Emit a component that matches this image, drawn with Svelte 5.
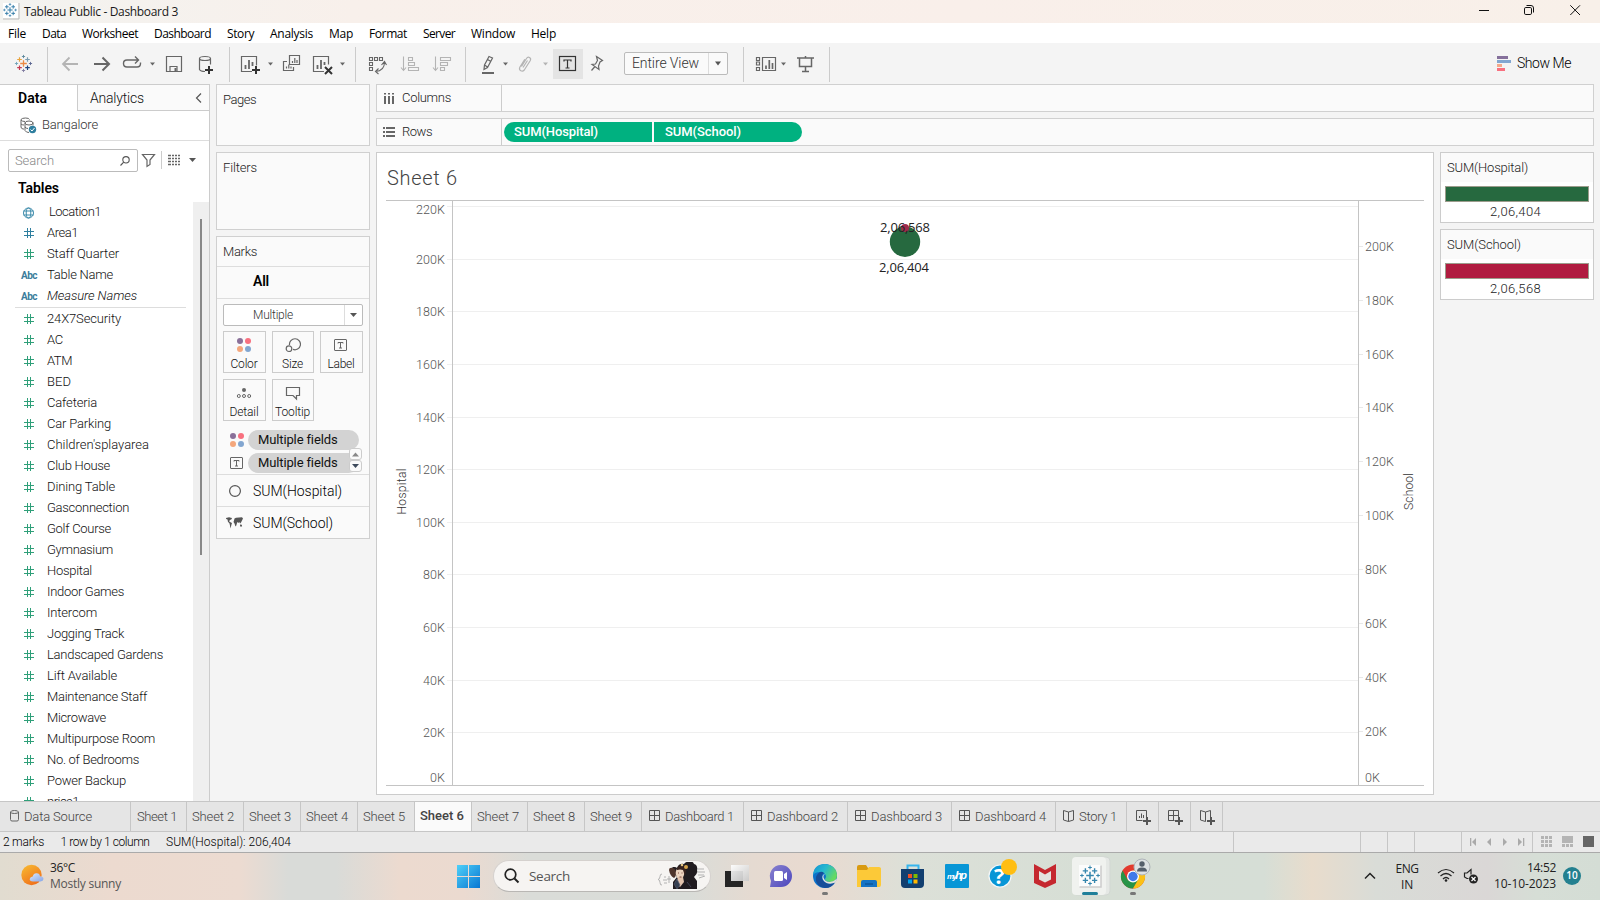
<script>
  // Spreads the letters of a label so that it takes the given width.
  function fit(node, width) {
    const current = node.getBoundingClientRect().width;
    const count = node.textContent.length;
    if (width && count) node.style.letterSpacing = ((width - current) / count).toFixed(3) + 'px';
  }

  const menu = [['File', 18, 34], ['Data', 24, 40], ['Worksheet', 56, 72], ['Dashboard', 57, 73], ['Story', 27, 43], ['Analysis', 43, 59], ['Map', 24, 40], ['Format', 38, 54], ['Server', 32, 48], ['Window', 44, 60], ['Help', 25, 41]];

  const dimensions = [['globe', 'Location1', 52], ['num dim', 'Area1', 31], ['num', 'Staff Quarter', 72], ['abc', 'Table Name', 66], ['abc', 'Measure Names', 90]];
  const measures = [['24X7Security', 74], ['AC', 16], ['ATM', 25], ['BED', 24], ['Cafeteria', 50], ['Car Parking', 64], ["Children'splayarea", 102], ['Club House', 63], ['Dining Table', 68], ['Gasconnection', 82], ['Golf Course', 64], ['Gymnasium', 66], ['Hospital', 45], ['Indoor Games', 77], ['Intercom', 50], ['Jogging Track', 77], ['Landscaped Gardens', 116], ['Lift Available', 70], ['Maintenance Staff', 100], ['Microwave', 59], ['Multipurpose Room', 108], ['No. of Bedrooms', 92], ['Power Backup', 79], ['price1', 32]];

  const leftAxis = Array.from({ length: 12 }, (_, i) => ({ label: i * 20 + 'K', y: 785.3 - i * 52.6, ty: i === 0 ? 777 : i === 11 ? 209.3 : 785 - i * 52.62 + 0.4 }));
  const rightAxis = Array.from({ length: 11 }, (_, i) => ({ label: i * 20 + 'K', y: 785 - i * 53.87, ty: i === 0 ? 777 : 785 - i * 53.87 }));

  const tabs = [['db', 'Data Source', 68, 131], ['first', 'Sheet 1', 40, 56], ['', 'Sheet 2', 42, 57], ['', 'Sheet 3', 42, 57], ['', 'Sheet 4', 42, 57], ['', 'Sheet 5', 42, 57], ['', 'Sheet 6', 44, 57], ['', 'Sheet 7', 42, 56], ['', 'Sheet 8', 42, 57], ['', 'Sheet 9', 42, 57], ['dash', 'Dashboard 1', 69, 102], ['dash', 'Dashboard 2', 71, 104], ['dash', 'Dashboard 3', 71, 104], ['dash', 'Dashboard 4', 71, 104], ['story', 'Story 1', 38, 71]];
</script>

{#snippet caret(x, y, c = '#666')}
  <path d="M{x - 2.5} {y - 1.5}h5l-2.5 3z" fill={c} stroke="none" />
{/snippet}

{#snippet plus(x, y, c = '#333')}
  <path d="M{x - 4} {y}h8M{x} {y - 4}v8" stroke={c} stroke-width="2" fill="none" />
{/snippet}

{#snippet cross(x, y, r, c, w = 1)}
  <path d="M{x - r} {y}h{2 * r}M{x} {y - r}v{2 * r}" stroke={c} stroke-width={w} fill="none" />
{/snippet}

{#snippet tableauMark(x, y, s, mono)}
  <g transform="translate({x} {y}) scale({s})">
    {@render cross(0, 0, 3.3, mono ?? '#eb8a44', 1.3)}
    {@render cross(-4, -4, 2.3, mono ?? '#e8a33d', 1.2)}
    {@render cross(4, -4, 2.3, mono ?? '#7c9db0', 1.2)}
    {@render cross(-4, 4.2, 2.3, mono ?? '#c43a51', 1.2)}
    {@render cross(4, 4.2, 2.3, mono ?? '#1f457e', 1.2)}
    {@render cross(0, -7, 1.6, mono ?? '#5b879b', 0.9)}
    {@render cross(0, 7, 1.6, mono ?? '#7f7aa0', 0.9)}
    {@render cross(-7, 0, 1.6, mono ?? '#6fa3b8', 0.9)}
    {@render cross(7, 0, 1.6, mono ?? '#5a6591', 0.9)}
  </g>
{/snippet}

{#snippet fourDots()}
  <svg width="16" height="16" viewBox="0 0 16 16"><circle cx="4" cy="4" r="3" fill="#8a7099" /><circle cx="12" cy="4" r="3" fill="#f8707f" /><circle cx="4" cy="12" r="3" fill="#f4a77c" /><circle cx="12" cy="12" r="3" fill="#82a6d0" /></svg>
{/snippet}

{#snippet labelIcon()}
  <svg width="14" height="12" viewBox="0 0 14 12" fill="none" stroke="#666"><rect x=".5" y=".5" width="12" height="11" rx=".5" /><path d="M4 4.500V3.500h5v1M6.500 3.500v5.500M5 9h3" /></svg>
{/snippet}

<div class="window">
  <header class="titlebar">
    <svg width="18" height="18" viewBox="0 0 18 18"><path d="M1 1h15v15h-15z" fill="#fff" /><path d="M1 17h16V1" stroke="#bbb" fill="none" />{@render tableauMark(8, 8, 0.8, '#337ca8')}</svg>
    <span class="caption" use:fit={154}>Tableau Public - Dashboard 3</span>
    <svg class="controls" width="121" height="23" viewBox="1479 0 121 23" fill="none" stroke="#111"><path d="M1479 10.500h10" /><rect x="1524.500" y="7.500" width="7" height="7" rx="1.300" /><path d="M1526.500 5.500h4.500q2.500 0 2.500 2.500v4.500" /><path d="M1570.300 5.300l9.700 9.700M1580 5.300l-9.700 9.700" /></svg>
  </header>

  <nav class="menubar">
    {#each menu as [name, w, slot]}
      <div class="menuitem" style:width="{slot}px"><span use:fit={w}>{name}</span></div>
    {/each}
  </nav>

  <div class="toolbar">
    <div class="group"><svg width="47" height="34" viewBox="0 47 47 34">{@render tableauMark(23.5, 63.5, 1, undefined)}</svg></div>
    <div class="group">
      <svg width="181" height="34" viewBox="48 47 181 34" fill="none" stroke="#666" stroke-width="1.500">
        <path d="M78 64H63M69.500 57.500L63 64l6.500 6.500" stroke="#b4b4b4" stroke-width="1.800" />
        <path d="M94 64h15M102.500 57.500L109 64l-6.500 6.500" stroke-width="2" />
        <path d="M138.500 60H127q-3.500 0-3.500 3.500t3.500 3.500h10q3.500 0 3.500-3.500v-1M135 56.500l3.500 3.500-3.500 3.500" stroke-width="1.400" />
        {@render caret(152.5, 64)}
        <path d="M166.500 56.500h15v15h-15zM170 71.500v-5h7v5" stroke-width="1.200" /><path d="M174.500 68h2v3h-2z" fill="#666" stroke="none" />
        <path d="M199.500 58.500v11q1 2 5.500 2M210.500 58.500v6M199.500 58.500q0-2 5.500-2t5.500 2-5.500 2-5.500-2" stroke-width="1.200" />
        {@render plus(209, 70)}
      </svg>
    </div>
    <div class="group">
      <svg width="125" height="34" viewBox="230 47 125 34" fill="none" stroke="#666" stroke-width="1.200">
        <path d="M252 71.500H241.500v-15h15v9" /><path d="M245.500 69v-4M249 69v-9M252.500 66v-4" stroke-width="1.800" />{@render plus(256, 70)}
        {@render caret(270.5, 64)}
        <path d="M289.500 55.500h10v9h-10zM287 61.500h-3.500v9h10v-3.500" /><path d="M292.500 63v-2M294.800 63v-5M297 63v-3M286.500 68.500v-2M288.800 68.500v-4M291 68.500v-2" />
        <path d="M324 71.500H313.500v-15h15v8" /><path d="M317.500 69v-4M321 69v-9M324.500 65v-3" stroke-width="1.800" /><path d="M325 67l7 7M332 67l-7 7" stroke="#333" stroke-width="2" />
        {@render caret(342.500, 64)}
      </svg>
    </div>
    <div class="group">
      <svg width="109" height="34" viewBox="356 47 109 34" fill="none" stroke="#666" stroke-width="1.100">
        <path d="M369.500 57.500h3v3h-3zM374.500 57.500h3v3h-3zM379.500 57.500h3v3h-3zM369.500 62.500h3v3h-3zM369.500 67.500h3v3h-3zM384.500 62q0 9-9 9.500M381.500 65l3-3.500 2 3.500M378.500 68.500l-3 3 3 2.500" />
        <g stroke="#b4b4b4"><path d="M403.500 56.500v14M401 67.500l2.500 3 2.500-3M408.500 57.500h4v3h-4zM408.500 62.500h6v3h-6zM408.500 67.500h10v3h-10z" /><path d="M435.500 56.500v14M433 67.500l2.500 3 2.500-3M440.500 57.500h10v3h-10zM440.500 62.500h7v3h-7zM440.500 67.500h4v3h-4z" /></g>
      </svg>
    </div>
    <div class="group last-view">
      <svg width="158" height="34" viewBox="466 47 158 34" fill="none" stroke="#666" stroke-width="1.200">
        <path d="M489 56.500l3.500 1.500-5 9.500-3.500 2 .5-4.500zM484.500 65l3 2M487.500 59.500l3.500 2" /><path d="M482 73h12" stroke-width="2" />{@render caret(505.5, 64)}
        <path d="M521.500 66.500l5-8q1.200-2 3-1t.8 3l-6 9.500q-1.500 1.800-3.500.8t-1-3.500l5-8M523 67.500l4.500-7" stroke="#b4b4b4" />{@render caret(545.5, 64, '#b4b4b4')}
        <rect x="553" y="49" width="30" height="30" fill="#e4e4e4" stroke="none" /><rect x="559.500" y="56.500" width="16" height="14" stroke="#333" /><path d="M564 61.500v-1.500h7v1.500M567.500 60v8M565.500 68h4" stroke="#333" />
        <path d="M596.500 56.500l6 4-2.500 1.500-1.500 4 .5 3.500-7-5 3.500-.5 2-3.500zM595 66.500l-3.500 4" />
      </svg>
      <div class="select view"><span use:fit={67}>Entire View</span><i><svg width="18" height="20" viewBox="0 0 18 20"><path d="M6 8.500h6l-3 4z" fill="#555" /></svg></i></div>
    </div>
    <div class="group">
      <svg width="85" height="34" viewBox="744 47 85 34" fill="none" stroke="#666" stroke-width="1.200">
        <path d="M756.500 57.500h3v3h-3zM756.500 62h3v3h-3zM756.500 67.500h3v3h-3zM762.500 57.500h13v13h-13z" /><path d="M766 69v-3.500M769.300 69v-9M772.500 69v-6" stroke-width="1.700" />{@render caret(783.5, 64)}
        <path d="M797 58h17M799.500 58v8.500h12V58M805.500 56v2M805.500 66.500v5M802 71.500h7" stroke-width="1.500" />
      </svg>
    </div>
    <div class="showme"><svg width="14" height="15" viewBox="0 0 14 15"><path d="M0 0h11v3H0z" fill="#85709b" /><path d="M0 4h14v3H0z" fill="#82a6d0" /><path d="M0 8h5v3H0z" fill="#f4a98a" /><path d="M0 12h8v3H0z" fill="#f8707f" /></svg><span use:fit={54}>Show Me</span></div>
  </div>

  <main>
    <aside class="data">
      <div class="panetabs"><b><span use:fit={29}>Data</span></b><div class="analytics"><span use:fit={54}>Analytics</span><svg width="7" height="10" viewBox="0 0 7 10"><path d="M6 .5L1.500 5 6 9.500" fill="none" stroke="#555" stroke-width="1.200" /></svg></div></div>
      <div class="source">
        <svg width="17" height="17" viewBox="0 0 17 17" fill="none" stroke="#666"><path d="M4 12H3q-2-.5-2-2V2.500Q2 1 5.500 1t4 1.500M1 3q1 1.500 4 1.500M1 7q1 1 3 1M5 5.500v8q1 2 4 2M13 5.500v3M5 6q0-2 4-2t4 2-4 2-4-2M5 10q1 1.500 3 1.500" /><circle cx="12.500" cy="12.500" r="3.700" fill="#2f7f9f" stroke="none" /><path d="M10.500 12.500l1.500 1.500 2.500-3" stroke="#fff" /></svg>
        <span use:fit={56}>Bangalore</span>
      </div>
      <div class="searchrow">
        <div class="search"><span use:fit={39}>Search</span><svg width="10" height="10" viewBox="0 0 10 10" fill="none" stroke="#555" stroke-width="1.100"><circle cx="6" cy="3.800" r="3.200" /><path d="M3.700 6.200L.5 9.500" /></svg></div>
        <svg width="57" height="22" viewBox="141 149 57 22" fill="none" stroke="#666"><path d="M142.500 154.500h12l-4.500 5.500v4.500l-3 2v-6.500z" stroke-width="1.200" /><path d="M161.500 151v18" stroke="#ccc" /><path d="M168 155.500h12M168 158.500h12M168 161.500h12M168 164.500h12" stroke-dasharray="3 1 2 1 2 1 2" stroke-width="1.400" /><path d="M189 158h7l-3.500 4z" fill="#555" stroke="none" /></svg>
      </div>
      <div class="fields">
        <h3><span use:fit={41}>Tables</span></h3>
        <div class="scroller">
          <ul>
            {#each dimensions as [kind, name, w]}
              <li class:location={kind === 'globe'} class:italic={name === 'Measure Names'}>
                {#if kind === 'abc'}<em><span use:fit={16}>Abc</span></em>
                {:else if kind === 'globe'}<svg width="13" height="12" viewBox="0 0 13 12" fill="none" stroke="#3b8aaa"><circle cx="6.500" cy="6" r="5" /><ellipse cx="6.500" cy="6" rx="2.300" ry="5" /><path d="M1.500 4h10M1.500 8h10" /></svg>
                {:else}<svg width="11" height="11" viewBox="0 0 11 11" fill="none" stroke={kind === 'num' ? '#2f9f79' : '#2f7f9f'}><path d="M0 3.500h10M0 7.500h10M3.500 0v10M6.500 0v10" /></svg>{/if}
                <span class="field" use:fit={w}>{name}</span>
              </li>
            {/each}
            <li class="rule"></li>
            {#each measures as [name, w]}
              <li><svg width="11" height="11" viewBox="0 0 11 11" fill="none" stroke="#2f9f79"><path d="M0 3.500h10M0 7.500h10M3.500 0v10M6.500 0v10" /></svg><span class="field" use:fit={w}>{name}</span></li>
            {/each}
          </ul>
          <div class="track"><div class="thumb"></div></div>
        </div>
      </div>
    </aside>

    <section class="cards">
      <div class="card pages"><span use:fit={33}>Pages</span></div>
      <div class="card filters"><span use:fit={34}>Filters</span></div>
      <div class="card marks">
        <div class="mtitle"><span use:fit={34}>Marks</span></div>
        <div class="all"><span use:fit={16}>All</span></div>
        <div class="select multiple"><span use:fit={40}>Multiple</span><i><svg width="17" height="19" viewBox="0 0 17 19"><path d="M5 8h7l-3.500 4z" fill="#555" /></svg></i></div>
        <div class="buttons">
          <div>{@render fourDots()}<span use:fit={27}>Color</span></div>
          <div><svg width="16" height="16" viewBox="0 0 16 16" fill="none" stroke="#666" stroke-width="1.200"><path d="M4.500 8A5.500 5.500 0 1 1 8 12.400" /><circle cx="4" cy="11.700" r="2.800" /></svg><span use:fit={21}>Size</span></div>
          <div><i class="ic">{@render labelIcon()}</i><span use:fit={27}>Label</span></div>
          <div><svg width="16" height="16" viewBox="0 0 16 16" fill="none" stroke="#666"><circle cx="8" cy="5" r="2" fill="#666" stroke="none" /><circle cx="2.800" cy="11" r="1.500" /><circle cx="8" cy="11" r="1.500" /><circle cx="13.200" cy="11" r="1.500" /></svg><span use:fit={29}>Detail</span></div>
          <div><svg width="16" height="16" viewBox="0 0 16 16" fill="none" stroke="#666" stroke-width="1.200"><path d="M1.500 2.500h13v8h-3V14L8 10.500H1.500z" /></svg><span use:fit={35}>Tooltip</span></div>
        </div>
        <div class="encodings">
          <div class="enc">{@render fourDots()}<p><span use:fit={79}>Multiple fields</span></p></div>
          <div class="enc second"><i class="ic">{@render labelIcon()}</i><p><span use:fit={79}>Multiple fields</span></p></div>
          <div class="spin"><i><svg width="11" height="10"><path d="M2 7.500h7l-3.500-4z" fill="#888" /></svg></i><i><svg width="11" height="10"><path d="M2 3h7l-3.500 4z" fill="#3d4a5c" /></svg></i></div>
        </div>
        <div class="markrow"><svg width="17" height="14" viewBox="0 0 17 14"><circle cx="8" cy="7" r="5.400" fill="none" stroke="#555" stroke-width="1.200" /></svg><span use:fit={89}>SUM(Hospital)</span></div>
        <div class="markrow"><svg width="17" height="12" viewBox="0 0 17 12" fill="#555"><path d="M0 1l3-.7 3 .7-.5 1.200L4 3 3 4.200 4.500 5.200 6 6 5.500 7.500 5 9.500l-.6 2-.5-3.500-.6-2L2 5 1.500 2.500.2 2zM8 3.500L8.500 1.500 10 .8l6-.5 1 1.200-1 2-1 2-1 1-.7-1.500-.8 1-.8-1L11 6l-.7 2.500-.8 1L8.500 6.500 7.500 5zM14 7.500l1.800.3.3 1.700h-2z" /></svg><span use:fit={80}>SUM(School)</span></div>
      </div>
    </section>

    <section class="work">
      <div class="shelf"><div class="name"><svg width="12" height="13" viewBox="0 0 12 13" fill="#666"><path d="M1 1h2v1.500H1zM1 4h2v8H1zM5 1h2v1.500H5zM5 4h2v8H5zM9 1h2v1.500H9zM9 4h2v8H9z" /></svg><span use:fit={49}>Columns</span></div></div>
      <div class="shelf"><div class="name rows"><svg width="12" height="10" viewBox="0 0 12 10" fill="#666"><path d="M0 0h2v2H0zM3 0h9v2H3zM0 4h2v2H0zM3 4h9v2H3zM0 8h2v2H0zM3 8h9v2H3z" /></svg><span use:fit={30}>Rows</span></div><div class="pills"><div><span use:fit={84}>SUM(Hospital)</span></div><div><span use:fit={76}>SUM(School)</span></div></div></div>
      <div class="canvas">
        <div class="viz">
          <svg width="1056" height="641" viewBox="377 153 1056 641">
            <text x="387" y="184.500" font-size="20" fill="#444" textLength="70" class="light">Sheet 6</text>
            {#each leftAxis as t}
              <path d="M447 {Math.floor(t.y) + 0.5}H1358" stroke="#efefef" />
              <text x={t.label.length === 2 ? 430 : t.label.length === 3 ? 423 : 416} y={t.ty + 4.5} textLength={t.label.length === 2 ? 15 : t.label.length === 3 ? 22 : 29} class="tick">{t.label}</text>
            {/each}
            {#each rightAxis as t}
              <path d="M1359 {Math.floor(t.y) + 0.5}h4" stroke="#e8e8e8" />
              <text x="1365" y={t.ty + 4.5} textLength={t.label.length === 2 ? 15 : t.label.length === 3 ? 22 : 29} class="tick">{t.label}</text>
            {/each}
            <path d="M386 200.500h1038M386 785.500h1038M452.500 201v584M1358.500 201v584" stroke="#c4c4c4" />
            <text transform="translate(406 514.500) rotate(-90)" textLength="46" class="axis">Hospital</text>
            <text transform="translate(1413 510) rotate(-90)" textLength="37" class="axis">School</text>
            <circle cx="905" cy="241.700" r="15.200" fill="#26693f" />
            <circle cx="905" cy="228" r="4" fill="#9e2a4c" />
            <text x="880" y="232" textLength="50" class="value">2,06,568</text>
            <text x="879" y="272" textLength="50" class="value">2,06,404</text>
          </svg>
        </div>
        <div class="legends">
          <div class="legend"><h4><span use:fit={81}>SUM(Hospital)</span></h4><div class="bar green"></div><p><span use:fit={51}>2,06,404</span></p></div>
          <div class="legend"><h4><span use:fit={74}>SUM(School)</span></h4><div class="bar red"></div><p><span use:fit={51}>2,06,568</span></p></div>
        </div>
      </div>
    </section>
  </main>

  <div class="tabs">
    {#each tabs as [icon, name, w, slot]}
      <div class="tab {icon}" class:active={name === 'Sheet 6'} style:width="{slot}px">
        {#if icon === 'db'}<svg width="9" height="12" viewBox="0 0 9 12" fill="none" stroke="#666"><path d="M.5 2v7.500q0 1.500 1.500 1.500h5q1.500 0 1.500-1.500V2q-.2-1.500-4-1.500T.5 2t4 1.500T8.500 2" /></svg>{/if}
        {#if icon === 'dash'}<svg width="11" height="11" viewBox="0 0 11 11" fill="none" stroke="#555"><path d="M.5.5h10v10H.5zM5.500.5v10M.5 5.500h10" /></svg>{/if}
        {#if icon === 'story'}<svg width="11" height="12" viewBox="0 0 11 12" fill="none" stroke="#555"><path d="M5.500 2v9.500M.5.5L5.500 2l5-1.500V10l-5 1.500L.5 10z" /></svg>{/if}
        <span use:fit={w}>{name}</span>
      </div>
    {/each}
    <div class="new"><svg width="16" height="16" viewBox="0 0 16 16" fill="none" stroke="#555"><path d="M7.500 11.500h-6V1.500h10V8M4.500 9V7M6.500 9V4.500M8.500 9V6" />{@render plus(12, 12, '#555')}</svg></div>
    <div class="new"><svg width="16" height="16" viewBox="0 0 16 16" fill="none" stroke="#555"><path d="M7.500 11.500h-6V1.500h10V8M6.500 1.500v10M1.500 6.500h10" />{@render plus(12, 12, '#555')}</svg></div>
    <div class="new"><svg width="16" height="16" viewBox="0 0 16 16" fill="none" stroke="#555"><path d="M6.500 3v9.500L1.500 11V1.500L6.500 3l5-1.500V8" />{@render plus(12, 12, '#555')}</svg></div>
  </div>

  <div class="status">
    <div class="info"><span use:fit={41}>2 marks</span><span use:fit={89}>1 row by 1 column</span><span use:fit={125}>SUM(Hospital): 206,404</span></div>
    <div class="w1"></div><div class="w2"></div><div class="w2"></div><div class="w3"></div>
    <div class="nav"><svg width="70" height="20" viewBox="0 0 70 20" fill="#aaa"><path d="M8 6h1.300v8H8zM14 6v8l-4-4zM29 6v8l-4-4zM41 6v8l4-4zM56 6v8l4-4zM61 6h1.300v8H61z" /></svg></div>
    <svg width="67" height="20" viewBox="1533 832 67 20" fill="#b4b4b4"><path d="M1541 836h3v3h-3zM1545 836h3v3h-3zM1549 836h3v3h-3zM1541 840h3v3h-3zM1545 840h3v3h-3zM1549 840h3v3h-3zM1541 844h3v3h-3zM1545 844h3v3h-3zM1549 844h3v3h-3zM1562 836h11v7h-11zM1562 844h3v3h-3zM1566 844h3v3h-3zM1570 844h3v3h-3z" /><path d="M1583 836h11v11h-11z" fill="#666" /></svg>
  </div>

  <footer class="taskbar">
    <div class="weather">
      <svg width="24" height="24" viewBox="0 0 24 24"><defs><linearGradient id="sun" x1="0" y1="0" x2=".6" y2="1"><stop offset="0" stop-color="#f8bd32" /><stop offset="1" stop-color="#f0711b" /></linearGradient><linearGradient id="cloud" x1="0" y1="0" x2="1" y2="1"><stop offset="0" stop-color="#dce8fc" /><stop offset="1" stop-color="#86a6e8" /></linearGradient></defs><circle cx="10.500" cy="11" r="10.200" fill="url(#sun)" /><path d="M12 17.500q-3.500-.3-3.300-2.500.5-2.300 3-2.500 1-3.500 4-3.200 3 .2 3.300 3 3.300 0 3.500 2.700-.2 2.200-3 2.500z" fill="url(#cloud)" /></svg>
      <div><span use:fit={25}>36°C</span><small><span use:fit={71}>Mostly sunny</span></small></div>
    </div>
    <div class="apps">
      <svg width="44" height="47" viewBox="0 0 44 47"><defs><linearGradient id="win" x1="0" y1="0" x2="1" y2="1"><stop offset="0" stop-color="#4fd0f8" /><stop offset="1" stop-color="#0876d2" /></linearGradient></defs><path d="M11 12h11v11h-11zM23 12h11v11h-11zM11 24h11v11h-11zM23 24h11v11h-11z" fill="url(#win)" /></svg>
      <div class="find">
        <svg width="16" height="16" viewBox="0 0 16 16" fill="none" stroke="#222" stroke-width="1.700"><circle cx="6.500" cy="6.500" r="5.300" /><path d="M10.500 10.500l4 4" stroke-width="2" /></svg>
        <span use:fit={41}>Search</span>
        <svg class="portrait" width="50" height="28" viewBox="0 0 50 28"><g fill="none" stroke="#aaa" stroke-width=".9"><path d="M5 12q-2 0-2 2.500T1 17.500q2 0 2 3t2 2.500M7 15h2M6 18h4M7 21h3M12 14v7M10 17h4M40 7h7M39 10h9M41 13h6M42 16l6-2" /></g><path d="M16 9q-3-2 0-4 3-.5 4 1 2-5 7-4 2-3 6-2 3-1 4 2 4 1 3 6 1 4-3 7l3 4v8H16V20l4-5z" fill="#211c20" /><path d="M12 8q0-3 4-2 3 1 3 5 0 4-2 5-4-2-5-8z" fill="#50352c" /><ellipse cx="23" cy="11" rx="4.300" ry="6" fill="#ecd3bf" /><path d="M21 15h5l1 5-4 5-4-4z" fill="#e4c4ae" /><path d="M20 6q2-3 6-2l3 4-1 6-2-6q-3-1-6 0z" fill="#38221e" /><circle cx="29" cy="5" r="2" fill="#d6a34b" /><circle cx="25" cy="3" r="1.300" fill="#e6c684" /><path d="M21 11h1M24.500 11h1M22.500 15h2" stroke="#6a2d29" stroke-width=".8" /><path d="M17 22l3-5 3 6-3 4zM30 20l4 5" fill="#364052" stroke="#555d74" stroke-width=".6" /></svg>
      </div>
      <svg width="44" height="47" viewBox="0 0 44 47"><defs><linearGradient id="pane" x1="0" y1="0" x2="1" y2="1"><stop offset="0" stop-color="#fff" /><stop offset="1" stop-color="#c9c9c9" /></linearGradient></defs><path d="M10 18h18v16H10z" fill="#252525" /><path d="M16 12h18v16H16z" fill="url(#pane)" opacity=".92" /></svg>
      <svg width="44" height="47" viewBox="0 0 44 47"><defs><linearGradient id="chat" x1="0" y1="0" x2="1" y2="1"><stop offset="0" stop-color="#8a83cf" /><stop offset="1" stop-color="#4b45bd" /></linearGradient></defs><path d="M22 12a11 11 0 1 1 0 22H11l1-6A11 11 0 0 1 22 12z" fill="url(#chat)" /><rect x="15" y="18" width="9" height="10" rx="1.500" fill="#fff" /><path d="M25 21l3-2v8l-3-2z" fill="#fff" /></svg>
      <svg width="44" height="47" viewBox="0 0 44 47"><defs><linearGradient id="edge" x1="0" y1="0" x2="1" y2=".5"><stop offset="0" stop-color="#1593d4" /><stop offset=".5" stop-color="#27b8cf" /><stop offset="1" stop-color="#66da61" /></linearGradient></defs><circle cx="22" cy="23" r="12" fill="#0c71c9" /><path d="M10 22Q11 11 22 11q11 1 12 11 0 6-6 7-6 0-6-3 1-1 1-3-1-4-6-4-5 0-7 3z" fill="url(#edge)" /><path d="M17 19q-5 3-4 9 2 6 9 7 7 0 10-6-4 3-9 1-5-3-4-8 1-1 2-2-2-2-4-1z" fill="#164d99" /><path d="M23 20.500q-3 1-2.500 4 1.500 4.500 6.500 4.500 4-.5 7-3.500l-1.500 4q-5 2-9 .5-5-3-4-7 .5-2 3.500-2.500z" fill="#e5e0da" /><rect x="19" y="39" width="6" height="3" rx="1.500" fill="#777" /></svg>
      <svg width="44" height="47" viewBox="0 0 44 47"><path d="M10 14q0-2 2-2h7l2 3h11q2 0 2 2v9H10z" fill="#d99a10" /><path d="M10 17h10l2-3h10q2 0 2 2v16q0 2-2 2H10z" fill="#fcc938" /><path d="M14 34v-5q0-2 2-2h12q2 0 2 2v5z" fill="#1573c4" /><path d="M18 31h8" stroke="#0b579e" stroke-width="1.500" /></svg>
      <svg width="44" height="47" viewBox="0 0 44 47"><path d="M16.500 16v-3.500h11V16" stroke="#36b5ed" stroke-width="2" fill="none" /><path d="M10 16h23v15q0 4-4 4H14q-4 0-4-4z" fill="#123f70" /><path d="M17 21h4v4h-4z" fill="#f05025" /><path d="M22.500 21h4v4h-4z" fill="#7fba00" /><path d="M17 26.500h4v4h-4z" fill="#00a4ef" /><path d="M22.500 26.500h4v4h-4z" fill="#ffb900" /></svg>
      <svg width="44" height="47" viewBox="0 0 44 47"><rect x="10" y="11" width="24" height="24" rx="1" fill="#0796d6" /><text x="12" y="26" class="hp" textLength="20">my<tspan font-size="11">hp</tspan></text></svg>
      <svg width="44" height="47" viewBox="0 0 44 47"><circle cx="21" cy="23" r="11" fill="#0796d6" stroke="#f4f7f8" stroke-width="1.200" /><text x="15" y="31" class="q" textLength="12">?</text><circle cx="30" cy="14" r="8" fill="#ffbe13" /></svg>
      <svg width="44" height="47" viewBox="0 0 44 47"><path d="M11 11l11 6 11-6v19l-11 5-11-5z" fill="#c5282f" /><path d="M16 18l6 3.500 6-3.500v8.500L22 29.500l-6-3z" fill="#e4e3df" /></svg>
      <svg width="44" height="47" viewBox="0 0 44 47"><rect x="6" y="4" width="37" height="38" rx="4" fill="#e5e8e5" stroke="#d2d7d3" /><rect x="5" y="4" width="34" height="38" rx="4" fill="#f0f2ef" /><path d="M12 12h22v22H12z" fill="#fcfcfc" /><path d="M12.500 34h21.500V12.500" stroke="#ccc" stroke-width="1.500" fill="none" />{@render tableauMark(23, 22.500, 1.15, '#3686ad')}<rect x="15" y="39" width="16" height="3" rx="1.500" fill="#20809a" /></svg>
      <svg width="44" height="47" viewBox="0 0 44 47"><circle cx="22" cy="23.500" r="12" fill="#e23a2e" /><path d="M11.600 17.500A12 12 0 0 0 22 35.500l5-8-5-4-5 4z" fill="#279447" /><path d="M22 17.500h10.400A12 12 0 0 1 22 35.500l5.200-9z" fill="#fbc116" /><circle cx="22" cy="23.500" r="6" fill="#fff" /><circle cx="22" cy="23.500" r="4.700" fill="#3f79ea" /><circle cx="31" cy="14" r="8" fill="#dde1e4" stroke="#aeb3b8" /><circle cx="31" cy="11" r="2.700" fill="#555f6c" /><path d="M26 18.500q0-4 5-4t5 4z" fill="#555f6c" /><rect x="19" y="39" width="6" height="3" rx="1.500" fill="#777" /></svg>
    </div>
    <div class="tray">
      <svg class="up" width="12" height="8" viewBox="0 0 12 8"><path d="M1 6.500L6 1.500l5 5" fill="none" stroke="#222" stroke-width="1.500" /></svg>
      <div class="lang"><span use:fit={23}>ENG</span><span use:fit={12}>IN</span></div>
      <svg class="net" width="42" height="18" viewBox="1437 866 42 18" fill="none" stroke="#222" stroke-width="1.200"><path d="M1438 873q8-7 16 0M1440.500 876q5.500-5 11 0M1443 879q3-3 6 0" /><circle cx="1446" cy="880.500" r="1.300" fill="#222" stroke="none" /><path d="M1468.500 878.500h-1.500l-2.500-1.500v-4h2.500l4-3.500v5" /><circle cx="1473.500" cy="879" r="4.500" fill="#222" stroke="none" /><path d="M1471.500 877l4 4M1475.500 877l-4 4" stroke="#fff" /></svg>
      <div class="clock"><span use:fit={29}>14:52</span><span use:fit={62}>10-10-2023</span></div>
      <b class="badge">10</b>
    </div>
  </footer>
</div>

<style>
  :global(body) { margin: 0; background: #f4f4f4; }
  .window { width: 1600px; height: 900px; display: flex; flex-direction: column; overflow: hidden; font: 13px/16px Roboto, "Liberation Sans", sans-serif; font-weight: 300; color: #333; background: #f4f4f4; }
  .window *, .window { box-sizing: border-box; }
  svg { display: block; flex: none; }
  span { white-space: nowrap; display: inline-block; }
  i { font-style: normal; }
  .titlebar { height: 23px; flex: none; display: flex; padding-left: 2px; background: linear-gradient(90deg, #f3f3f0, #f8f0eb 22%, #f9efea 60%, #f8f0e9); }
  .titlebar svg:first-child { margin-top: 2px; }
  .caption { margin: 4px 0 0 4px; font: 12px/16px "Open Sans", sans-serif; color: #1a1a1a; }
  .controls { margin-left: auto; }
  .menubar { height: 20px; flex: none; display: flex; padding-left: 8px; background: #fff; font: 12px/20px "Open Sans", sans-serif; color: #000; }
  .menuitem { flex: none; margin-top: 1px; }
  .toolbar { height: 41px; flex: none; display: flex; padding-top: 4px; }
  .group { height: 35px; display: flex; border-right: 1px solid #cbcbcb; }
  .select { display: flex; justify-content: space-between; border: 1px solid #bbb; border-radius: 2px; }
  .select i { border-left: 1px solid #ddd; }
  .last-view { width: 278px; }
  .view { width: 104px; height: 23px; margin-top: 5px; padding-left: 7px; background: #fafafa; font-size: 14px; font-weight: 300; line-height: 21px; }
  .showme { margin: 9px 29px 0 auto; display: flex; gap: 6px; font-size: 14px; font-weight: 300; color: #000; line-height: 15px; }
  main { height: 717px; flex: none; display: flex; overflow: hidden; }
  .data { width: 210px; flex: none; display: flex; flex-direction: column; background: #fff; border: 1px solid #ccc; border-width: 1px 1px 0 0; color: #111; }
  .panetabs { height: 26px; flex: none; display: flex; line-height: 26px; font-size: 14px; }
  .panetabs b { width: 77px; padding-left: 18px; font-weight: 600; color: #000; }
  .analytics { flex: 1; display: flex; justify-content: space-between; align-items: center; padding: 0 7px 0 12px; border: 1px solid #ccc; border-width: 0 0 1px 1px; background: #fafafa; font-weight: 300; color: #111; }
  .source { height: 30px; flex: none; display: flex; align-items: center; gap: 5px; padding: 0 0 1px 20px; border-bottom: 1px solid #ddd; font-weight: 300; color: #333; }
  .searchrow { display: flex; gap: 3px; padding: 8px 0 0 8px; flex: none; }
  .search { width: 130px; height: 23px; display: flex; justify-content: space-between; align-items: center; padding: 0 7px 0 6px; border: 1px solid #bbb; border-radius: 2px; color: #888; font-weight: 300; }
  .fields { min-height: 0; display: flex; flex-direction: column; }
  h3 { margin: 8px 0 5px 18px; font-size: 14px; line-height: 17px; font-weight: 600; color: #000; }
  .scroller { min-height: 0; display: flex; justify-content: space-between; }
  ul { list-style: none; margin: 0; padding: 0 0 0 15px; width: 186px; }
  li { height: 21px; display: flex; align-items: center; font-weight: 300; padding-left: 9px; gap: 12px; line-height: 19px; }
  .field { height: 21px; }
  li.location { padding-left: 7px; gap: 14px; }
  li.italic { font-style: italic; }
  li:has(em) { padding-left: 6px; gap: 10px; }
  li em { font: 700 10px/20px Roboto, sans-serif; color: #3b7d9b; }
  li.rule { height: 1px; background: #ddd; margin-bottom: 1px; }
  .track { width: 16px; background: #efefef; padding: 17px 0 0 7px; }
  .thumb { width: 2px; height: 336px; background: #888; }
  .cards { width: 154px; margin-left: 6px; flex: none; display: flex; flex-direction: column; gap: 6px; font-weight: 300; color: #222; }
  .card { border: 1px solid #d0d0d0; background: #fafafa; padding: 7px 6px; }
  .pages { height: 62px; }
  .filters { height: 78px; }
  .card.marks { height: 303px; padding: 0; }
  .mtitle { height: 30px; padding: 7px 6px; border-bottom: 1px solid #ddd; }
  .all { height: 32px; padding: 6px 0 0 36px; border-bottom: 1px solid #ddd; font-weight: 600; font-size: 14px; color: #000; }
  .multiple { height: 22px; margin: 5px 6px 5px; padding-left: 29px; line-height: 21px; font-size: 12px; background: #fff; color: #333; }
  .buttons { display: grid; grid-template-columns: 43px 42px 43px; gap: 6px; padding: 0 6px; }
  .buttons > div { height: 42px; border: 1px solid #ccc; display: flex; flex-direction: column; align-items: center; justify-content: space-between; padding: 5px 1px 0 0; font-size: 12px; line-height: 15px; color: #111; }
  .ic { width: 16px; height: 16px; display: flex; align-items: center; justify-content: center; flex: none; }
  .encodings { position: relative; height: 54px; padding: 9px 0 0 12px; border-bottom: 1px solid #ddd; }
  .enc { display: flex; align-items: center; gap: 3px; height: 20px; margin-bottom: 3px; }
  .enc p { margin: 0; width: 111px; height: 20px; border-radius: 10px; background: #d3d3d3; padding-left: 10px; line-height: 20px; font-weight: 400; color: #111; }
  .spin { position: absolute; right: 7px; top: 27px; display: flex; flex-direction: column; }
  .spin i { width: 13px; height: 12px; border: 1px solid #ccc; border-radius: 3px; background: #fafafa; }
  .markrow { height: 32px; display: flex; align-items: center; gap: 9px; padding-left: 10px; font-size: 14px; color: #000; border-bottom: 1px solid #ddd; }
  .markrow:last-child { border: 0; padding-left: 9px; gap: 10px; }
  .work { width: 1218px; margin-left: 6px; display: flex; flex-direction: column; gap: 6px; flex: none; font-weight: 300; }
  .shelf { height: 28px; flex: none; border: 1px solid #d0d0d0; background: #fafafa; display: flex; color: #222; }
  .name { width: 125px; border-right: 1px solid #ccc; padding-left: 6px; gap: 7px; display: flex; align-items: center; }
  .name.rows svg { margin-top: -1px; }
  .pills { display: flex; gap: 2px; padding: 3px 2px; }
  .pills div { width: 148px; height: 20px; background: #00b180; color: #fff; padding-left: 11px; line-height: 19px; font-weight: 500; }
  .pills div:first-child { border-radius: 10px 0 0 10px; padding-left: 10px; }
  .pills div:last-child { border-radius: 0 10px 10px 0; }
  .canvas { display: flex; gap: 6px; }
  .viz { width: 1058px; height: 643px; border: 1px solid #ccc; background: #fff; }
  text { font-family: Roboto, sans-serif; }
  .light { font-weight: 300; }
  .tick { font-size: 12.5px; font-weight: 300; fill: #555; }
  .axis { font-size: 12px; fill: #333; }
  .value { font: 13px "Open Sans", sans-serif; fill: #222; }
  .legends { width: 154px; display: flex; flex-direction: column; gap: 6px; }
  .legend { height: 71px; border: 1px solid #ccc; background: #fff; }
  .legend h4 { margin: 0; height: 29px; background: #fafafa; font-weight: 300; font-size: 13px; padding: 7px 6px; color: #222; }
  .bar { margin: 4px 4px 2px; height: 16px; border: 1px solid #9c9c8c; }
  .green { background: #26693f; }
  .red { background: #b01c40; }
  .legend p { margin: 0; text-align: center; padding-right: 3px; color: #222; }
  .tabs { height: 31px; flex: none; display: flex; border: 1px solid #c6c6c6; border-width: 1px 0; background: #e5e5e5; line-height: 29px; font-weight: 300; color: #444; }
  .tab { flex: none; border-right: 1px solid #c6c6c6; padding-left: 5px; display: flex; align-items: center; gap: 5px; height: 29px; }
  .tab.db { padding-left: 10px; }
  .tab.first { padding-left: 6px; }
  .tab.dash, .tab.story { padding-left: 7px; }
  .tab svg { margin-top: -2px; }
  .tab.active { background: #fafafa; font-weight: 500; color: #444; padding-bottom: 2px; }
  .new { width: 32px; flex: none; border-right: 1px solid #c6c6c6; padding: 7px 0 0 8px; }
  .status { height: 21px; flex: none; display: flex; background: #eaeaea; border-bottom: 1px solid #aaa; color: #000; font-size: 12px; line-height: 21px; font-weight: 300; }
  .status > div { border-right: 1px solid #c6c6c6; flex: none; }
  .info { width: 1234px; padding-left: 3px; display: flex; gap: 16.5px; }
  .w1 { width: 127px; }
  .w2 { width: 27px; }
  .w3 { width: 47px; }
  .nav { width: 71px; }
  .taskbar { height: 47px; flex: none; display: flex; background: linear-gradient(90deg, #e1dcd0 0, #ecdacf 7%, #ecdbd1 15%, #d9dbd8 18%, #d9dbd8 21%, #ecdacf 25%, #ebdad0 29%, #dadcd8 33%, #d9dcd8 43%, #e5dad1 47%, #e9dad0 51%, #dce0d8 57%, #d6ded5 68%, #d6ded6 79%, #e8dccc 82%, #d9dcd7 86%, #dad7d6 93%, #d6ded6 96%, #d4ddd5); font-family: "Open Sans", sans-serif; font-weight: 400; }
  .weather { width: 446px; display: flex; padding-left: 21px; gap: 5px; font-size: 12px; color: #222; }
  .weather svg { margin-top: 11px; }
  .weather > div { display: flex; flex-direction: column; padding-top: 7px; }
  .weather div > span { align-self: flex-start; }
  small { font-size: 12px; color: #555; }
  .apps { display: flex; flex: none; }
  .find { width: 218px; height: 32px; margin: 7px 4px 0 3px; border-radius: 16px; background: #f6f4f2; border: 1px solid #d5d1ce; border-bottom-color: #b9b7b4; display: flex; align-items: center; padding: 0 3px 0 10px; font-size: 13.500px; color: #555; gap: 9px; }
  .portrait { margin-left: auto; }
  .hp { font: italic 700 8px "Liberation Sans", sans-serif; fill: #fff; }
  .q { font: 700 22px "Open Sans", sans-serif; fill: #fff; }
  .tray { display: flex; margin-left: 209px; font-size: 12px; color: #222; flex: none; }
  .up { margin-top: 19px; }
  .lang { width: 24px; margin: 8px 0 0 19px; display: flex; flex-direction: column; align-items: center; }
  .net { margin: 13px 0 0 18px; }
  .clock { width: 62px; margin: 7px 7px 0 15px; display: flex; flex-direction: column; align-items: flex-end; }
  .badge { width: 18px; height: 18px; margin-top: 14px; border-radius: 9px; background: #23808f; color: #fff; font-size: 10px; line-height: 17px; text-align: center; font-weight: 600; }
</style>
